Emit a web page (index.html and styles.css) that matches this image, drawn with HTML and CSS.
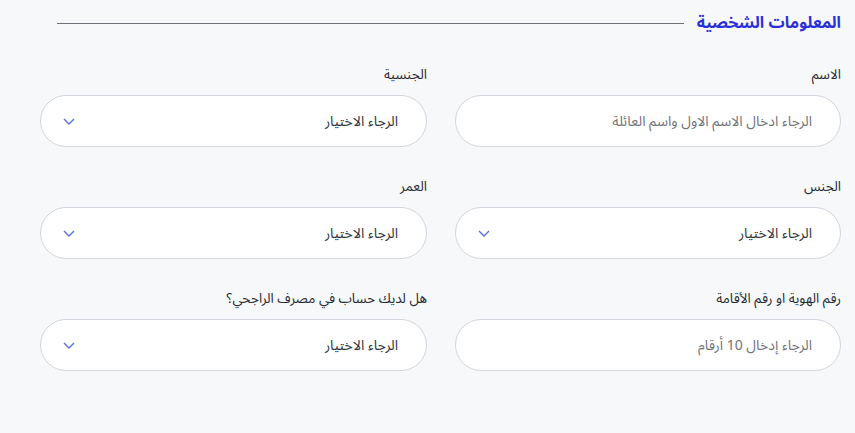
FILE: index.html
```html
<!DOCTYPE html>
<html lang="ar" dir="rtl">
<head>
<meta charset="utf-8">
<link rel="stylesheet" href="styles.css">
</head>
<body>
<div class="page">
  <div class="section-head">
    <h2 class="section-title">المعلومات الشخصية</h2>
    <span class="section-line"></span>
  </div>
  <div class="form-grid">
    <div class="field">
      <label class="field-label">الاسم</label>
      <div class="control"><span class="placeholder">الرجاء ادخال الاسم الاول واسم العائلة</span></div>
    </div>
    <div class="field">
      <label class="field-label">الجنسية</label>
      <div class="control select"><span class="value">الرجاء الاختيار</span>
        <svg class="chev" width="12" height="7" viewBox="0 0 12 7"><path d="M1 1l5 5 5-5" fill="none" stroke="#5b6ee1" stroke-width="1.4"/></svg>
      </div>
    </div>
    <div class="field">
      <label class="field-label">الجنس</label>
      <div class="control select"><span class="value">الرجاء الاختيار</span>
        <svg class="chev" width="12" height="7" viewBox="0 0 12 7"><path d="M1 1l5 5 5-5" fill="none" stroke="#5b6ee1" stroke-width="1.4"/></svg>
      </div>
    </div>
    <div class="field">
      <label class="field-label">العمر</label>
      <div class="control select"><span class="value">الرجاء الاختيار</span>
        <svg class="chev" width="12" height="7" viewBox="0 0 12 7"><path d="M1 1l5 5 5-5" fill="none" stroke="#5b6ee1" stroke-width="1.4"/></svg>
      </div>
    </div>
    <div class="field">
      <label class="field-label">رقم الهوية او رقم الأقامة</label>
      <div class="control"><span class="placeholder">الرجاء إدخال 10 أرقام</span></div>
    </div>
    <div class="field">
      <label class="field-label">هل لديك حساب في مصرف الراجحي؟</label>
      <div class="control select"><span class="value">الرجاء الاختيار</span>
        <svg class="chev" width="12" height="7" viewBox="0 0 12 7"><path d="M1 1l5 5 5-5" fill="none" stroke="#5b6ee1" stroke-width="1.4"/></svg>
      </div>
    </div>
  </div>
</div>
</body>
</html>
```
FILE: styles.css
```css
html, body {
  margin: 0;
  padding: 0;
  background: #f7f8fa;
}
body {
  font-family: "Noto Sans Arabic", "DejaVu Sans", "Noto Sans", sans-serif;
  color: #1f2430;
}
.page {
  padding: 13px 14px 0 28px;
}
.section-head {
  display: flex;
  align-items: center;
  gap: 13px;
  padding-left: 29px;
  height: 20px;
}
.section-title {
  margin: 0;
  font-size: 16px;
  font-weight: 700;
  color: #2b2fd9;
  line-height: 20px;
  white-space: nowrap;
}
.section-line {
  flex: 1;
  height: 1px;
  background: #6f7278;
}
.form-grid {
  display: grid;
  grid-template-columns: 386px 387px;
  column-gap: 28px;
  row-gap: 30px;
  margin-top: 32px;
}
.field {
  display: flex;
  flex-direction: column;
  gap: 10px;
}
.field-label {
  font-size: 13.5px;
  line-height: 20px;
  color: #262a33;
}
.control {
  height: 50px;
  border: 1px solid #d3d6de;
  border-radius: 26px;
  background: #fff;
  display: flex;
  align-items: center;
  justify-content: space-between;
  padding: 0 28px 0 22px;
}
.placeholder {
  font-size: 14px;
  color: #70747c;
}
.value {
  font-size: 14px;
  color: #30343d;
}
.chev {
  display: block;
}
```
